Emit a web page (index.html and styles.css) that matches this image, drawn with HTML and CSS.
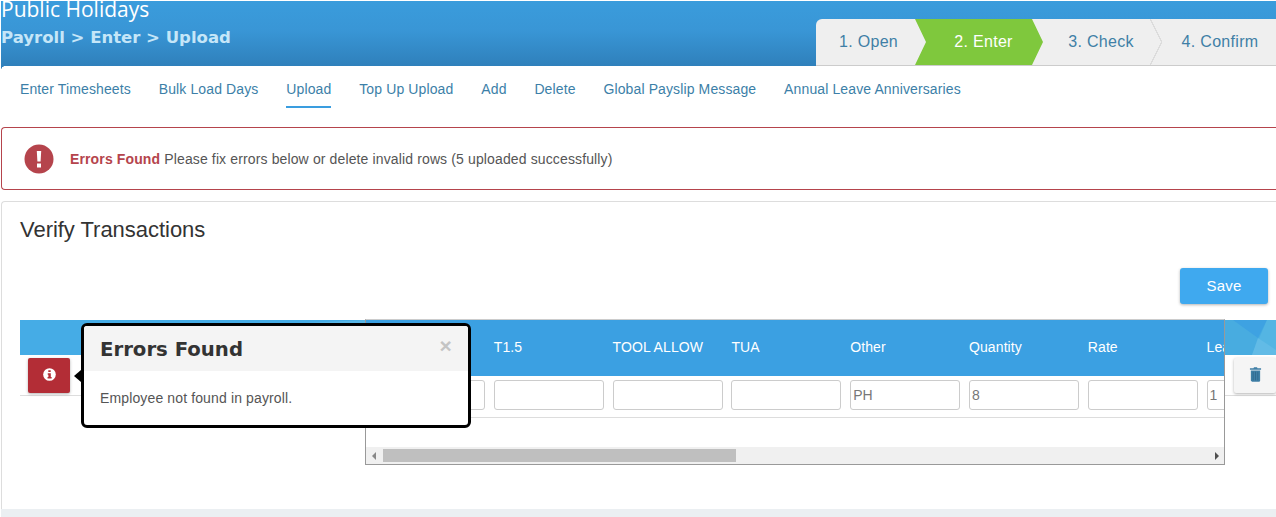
FILE: index.html
```html
<!DOCTYPE html>
<html lang="en">
<head>
<meta charset="utf-8">
<title>Public Holidays</title>
<link rel="stylesheet" href="styles.css">
</head>
<body>
<header class="hero">
  <div class="hero-titles">
    <h1 class="hero-title">Public Holidays</h1>
    <p class="crumbs">Payroll &gt; Enter &gt; Upload</p>
  </div>
  <ol class="steps">
    <li class="step step-first">1. Open</li>
    <li class="step step-active">2. Enter</li>
    <li class="step step-check">3. Check</li>
    <li class="step step-last">4. Confirm</li>
  </ol>
</header>
<nav class="tabs">
  <a class="tab">Enter Timesheets</a>
  <a class="tab">Bulk Load Days</a>
  <a class="tab tab-active">Upload</a>
  <a class="tab">Top Up Upload</a>
  <a class="tab">Add</a>
  <a class="tab">Delete</a>
  <a class="tab">Global Payslip Message</a>
  <a class="tab">Annual Leave Anniversaries</a>
</nav>
<section class="alert">
  <svg class="alert-icon" viewBox="0 0 30 30" aria-hidden="true"><circle cx="15" cy="15" r="14.5" fill="#b5444c"/><path d="M12.8 7h4.4l-.6 10.5h-3.2zM13 19.6h4v3.9h-4z" fill="#fff"/></svg>
  <p class="alert-text"><strong>Errors Found</strong> Please fix errors below or delete invalid rows (5 uploaded successfully)</p>
</section>
<main class="panel">
  <h2 class="panel-title">Verify Transactions</h2>
  <div class="actions"><button class="save">Save</button></div>
  <div class="grid-wrap">
    <div class="fixed-left">
      <div class="fixed-head"></div>
      <div class="fixed-row">
        <button class="err-btn" aria-label="Error details">
          <svg viewBox="0 0 14 14" width="13" height="13" aria-hidden="true"><circle cx="7" cy="7" r="6.8" fill="#fff"/><path d="M5.7 2.5h2.6v1.9H5.7zM5.1 5.6h3.3v4h.9v1.6H4.9V9.6h.9V7.2h-.7z" fill="#b32d36"/></svg>
        </button>
      </div>
    </div>
    <div class="scroller">
      <div class="table">
        <div class="thead">
          <span class="th"></span><span class="th">T1.5</span><span class="th">TOOL ALLOW</span><span class="th">TUA</span><span class="th">Other</span><span class="th">Quantity</span><span class="th">Rate</span><span class="th">Leave</span>
        </div>
        <div class="tbody">
          <input class="cell" value=""><input class="cell" value=""><input class="cell" value=""><input class="cell" value=""><input class="cell" value="PH"><input class="cell" value="8"><input class="cell" value=""><input class="cell" value="1">
        </div>
      </div>
      <div class="scrollbar">
        <span class="arrow arrow-left"></span>
        <span class="track"><span class="thumb"></span></span>
        <span class="arrow arrow-right"></span>
      </div>
    </div>
    <div class="fixed-right">
      <div class="fixed-head-right">
        <svg viewBox="0 0 51 35" width="51" height="35" preserveAspectRatio="none" aria-hidden="true"><rect width="51" height="35" fill="#48ace0"/><path d="M8 0H42L33 18z" fill="#3ea2e2"/><path d="M42 0H51V35H27z" fill="#54b5e3"/><path d="M33 18L27 35H51V30z" fill="#62bbe6"/></svg>
      </div>
      <div class="fixed-row-right">
        <button class="del-btn" aria-label="Delete row">
          <svg viewBox="0 0 14 16" width="13" height="15" aria-hidden="true"><path fill="#3f7fa6" d="M4.8 1.2 5.4.2h3.2l.6 1H13v1.6H1V1.2zM2 3.6h10v10.9c0 .8-.5 1.3-1.2 1.3H3.2c-.7 0-1.2-.5-1.2-1.3z"/><path stroke="#2d6488" stroke-width=".8" d="M4.5 5v9.3M7 5v9.3M9.5 5v9.3"/></svg>
        </button>
      </div>
    </div>
    <aside class="popover">
      <span class="pop-arrow"></span>
      <div class="pop-head">
        <h3 class="pop-title">Errors Found</h3>
        <span class="pop-close">×</span>
      </div>
      <p class="pop-body">Employee not found in payroll.</p>
    </aside>
  </div>
</main>
<div class="page-foot"></div>
</body>
</html>
```

FILE: styles.css
```css
* { box-sizing: border-box; }
html, body { margin: 0; padding: 0; }
body {
  width: 1276px;
  height: 517px;
  overflow: hidden;
  background: #fff;
  font-family: "Liberation Sans", Arial, sans-serif;
  font-size: 14px;
  letter-spacing: .13px;
  color: #555;
}
.hero {
  height: 65px;
  margin: 1px 0 0 1px;
  display: flex;
  justify-content: space-between;
  align-items: flex-end;
  background: linear-gradient(#3a9cdc 0%, #3996d6 45%, #2f80bb 100%);
  position: relative;
  letter-spacing: 0;
}
.hero::after {
  content: "";
  position: absolute;
  left: 0;
  bottom: -4px;
  width: 4px;
  height: 4px;
  background: radial-gradient(circle at 100% 100%, transparent 3.6px, #2f80bb 4px);
}
.hero-titles { align-self: flex-start; }
.hero-title {
  margin: 0;
  font: 400 21px/16px "Open Sans", sans-serif;
  color: #fff;
}
.crumbs {
  margin: 11px 0 0 0;
  font: 700 16.5px/20px "DejaVu Sans", sans-serif;
  color: #c5e6f8;
}
.steps {
  list-style: none;
  margin: 0;
  padding: 0;
  width: 460px;
  height: 47px;
  display: flex;
  background: #efefef;
  border-bottom: 1px solid #ccc;
  border-top-left-radius: 6px;
  font-size: 16px;
  letter-spacing: .3px;
  color: #3f7fa6;
}
.step {
  line-height: 46px;
  text-align: center;
  position: relative;
}
.step-first { width: 99px; text-align: left; padding-left: 23px; }
.step-active {
  width: 128px;
  padding-left: 9px;
  color: #fff;
  background: #7fc83d;
  clip-path: polygon(0 0, 117px 0, 100% 50%, 117px 100%, 0 100%, 11px 50%);
}
.step-check { width: 116px; }
.step-check::after {
  content: "";
  position: absolute;
  right: -3px;
  top: 0;
  width: 12px;
  height: 46px;
  background: linear-gradient(to top right, transparent 47%, #dcdcdc 47%, #dcdcdc 53%, transparent 53%) top / 100% 50% no-repeat,
    linear-gradient(to bottom right, transparent 47%, #dcdcdc 47%, #dcdcdc 53%, transparent 53%) bottom / 100% 50% no-repeat;
}
.step-last { width: 117px; padding-left: 5px; }
.tabs {
  height: 61px;
  padding-left: 19px;
  margin-left: 1px;
  display: flex;
  gap: 27.85px;
  align-items: flex-start;
  letter-spacing: .12px;
}
.tab {
  font-size: 14px;
  line-height: 20px;
  padding: 13px 0 9px;
  color: #3c7fa8;
}
.tab-active { border-bottom: 2px solid #3a9ddf; height: 42px; }
.alert {
  height: 63px;
  margin-left: 1px;
  border: 1px solid #b5444c;
  border-right: 0;
  border-radius: 4px 0 0 4px;
  display: flex;
  align-items: center;
  padding-left: 22px;
  gap: 16px;
}
.alert-icon { width: 30px; height: 30px; flex: none; }
.alert-text { margin: 0; font-size: 14px; color: #555; }
.alert-text strong { color: #b5444c; }
.panel {
  margin: 11px 0 0 1px;
  height: 308px;
  border: 1px solid #ddd;
  border-right: 0;
  border-bottom: 0;
  border-radius: 4px 0 0 0;
  padding: 0 0 0 18px;
}
.panel-title {
  margin: 0;
  padding-top: 15px;
  font-size: 22px;
  line-height: 26px;
  font-weight: 400;
  letter-spacing: -.03px;
  color: #333;
}
.actions {
  display: flex;
  justify-content: flex-end;
  padding: 25px 8px 0 0;
}
.save {
  width: 88px;
  height: 36px;
  padding: 0 0 2px;
  border: 0;
  border-radius: 3px;
  background: #3fa9ef;
  color: #fff;
  font: 15px "Liberation Sans", sans-serif;
  letter-spacing: .15px;
  box-shadow: 0 1px 3px rgba(0,0,0,.3);
}
.grid-wrap {
  margin-top: 15px;
  display: flex;
  position: relative;
  height: 146px;
  align-items: flex-start;
}
.fixed-left { width: 345px; flex: none; padding-top: 1px; }
.fixed-head {
  height: 35px;
  background: #45ace6;
  position: relative;
  overflow: hidden;
}
.fixed-head::after {
  content: "";
  position: absolute;
  right: 0;
  top: 0;
  width: 60px;
  height: 3px;
  background: #58b6e6;
  clip-path: polygon(0 100%, 100% 0, 100% 100%);
}
.fixed-row {
  height: 41px;
  border-bottom: 1px solid #ddd;
  padding: 3px 0 0 8px;
}
.err-btn {
  width: 42px;
  height: 35px;
  padding: 0 0 2px;
  border: 0;
  border-radius: 2px;
  background: #b32d36;
  display: flex;
  align-items: center;
  justify-content: center;
  box-shadow: 0 1px 3px rgba(0,0,0,.3);
}
.scroller {
  width: 860px;
  flex: none;
  height: 146px;
  border: 1px solid #999;
  border-top-color: #ccc;
  overflow: hidden;
  display: flex;
  flex-direction: column;
  background: #fff;
}
.table { flex: 1; overflow: hidden; }
.thead {
  height: 56px;
  display: flex;
  padding-left: 9px;
  background: #3ba0e2;
  color: #fff;
  white-space: nowrap;
}
.th {
  width: 118.8px;
  flex: none;
  font-size: 14px;
  line-height: 54px;
  letter-spacing: .1px;
}
.tbody {
  height: 42px;
  display: flex;
  gap: 8.8px;
  padding: 4px 0 0 9px;
  border-bottom: 1px solid #ddd;
}
.cell {
  width: 110px;
  flex: none;
  height: 30px;
  border: 1px solid #ccc;
  border-radius: 3px;
  padding: 0 2px;
  font: 14px "Liberation Sans", sans-serif;
  color: #777;
  background: #fff;
  outline: 0;
}
.scrollbar {
  height: 17px;
  background: #f0f0f0;
  display: flex;
  align-items: center;
  flex: none;
}
.arrow { width: 17px; height: 17px; flex: none; position: relative; }
.arrow::after {
  content: "";
  position: absolute;
  top: 5px;
  border: 4px solid transparent;
}
.arrow-left::after { left: 2px; border-right-color: #888; }
.arrow-right::after { left: 8px; border-left-color: #505050; }
.track { flex: 1; height: 13px; }
.thumb { display: block; width: 353px; height: 13px; background: #bfbfbf; }
.fixed-right { width: 51px; flex: none; padding-top: 1px; }
.fixed-head-right { height: 35px; }
.fixed-head-right svg { display: block; }
.fixed-row-right {
  height: 41px;
  border-bottom: 1px solid #ddd;
  padding: 3px 0 0 9px;
}
.del-btn {
  width: 42px;
  height: 35px;
  padding: 0 0 2px;
  border: 0;
  border-radius: 2px;
  background: #f5f5f5;
  display: flex;
  align-items: center;
  justify-content: center;
  box-shadow: 0 1px 3px rgba(0,0,0,.3);
}
.popover {
  position: absolute;
  left: 61px;
  top: 4px;
  width: 390px;
  height: 105px;
  border: 3px solid #000;
  border-radius: 6px;
  background: #fff;
}
.pop-arrow {
  position: absolute;
  left: -10px;
  top: 44px;
  border: 6px solid transparent;
  border-left: 0;
  border-right: 7px solid #000;
}
.pop-head {
  height: 45px;
  background: #f4f4f4;
  border-radius: 3px 3px 0 0;
  display: flex;
  justify-content: space-between;
  padding: 0 16px 0 16px;
}
.pop-title {
  margin: 0;
  font: 700 19.7px/48px "DejaVu Sans", sans-serif;
  letter-spacing: 0;
  color: #333;
}
.pop-close {
  font: 700 21px/40px "Liberation Sans", sans-serif;
  color: #c4c4c4;
}
.pop-body {
  margin: 0;
  padding: 19px 0 0 16px;
  font-size: 14px;
  line-height: 17px;
  color: #555;
}
.page-foot { height: 9px; background: #ebeff2; margin-left: 1px; }
```
